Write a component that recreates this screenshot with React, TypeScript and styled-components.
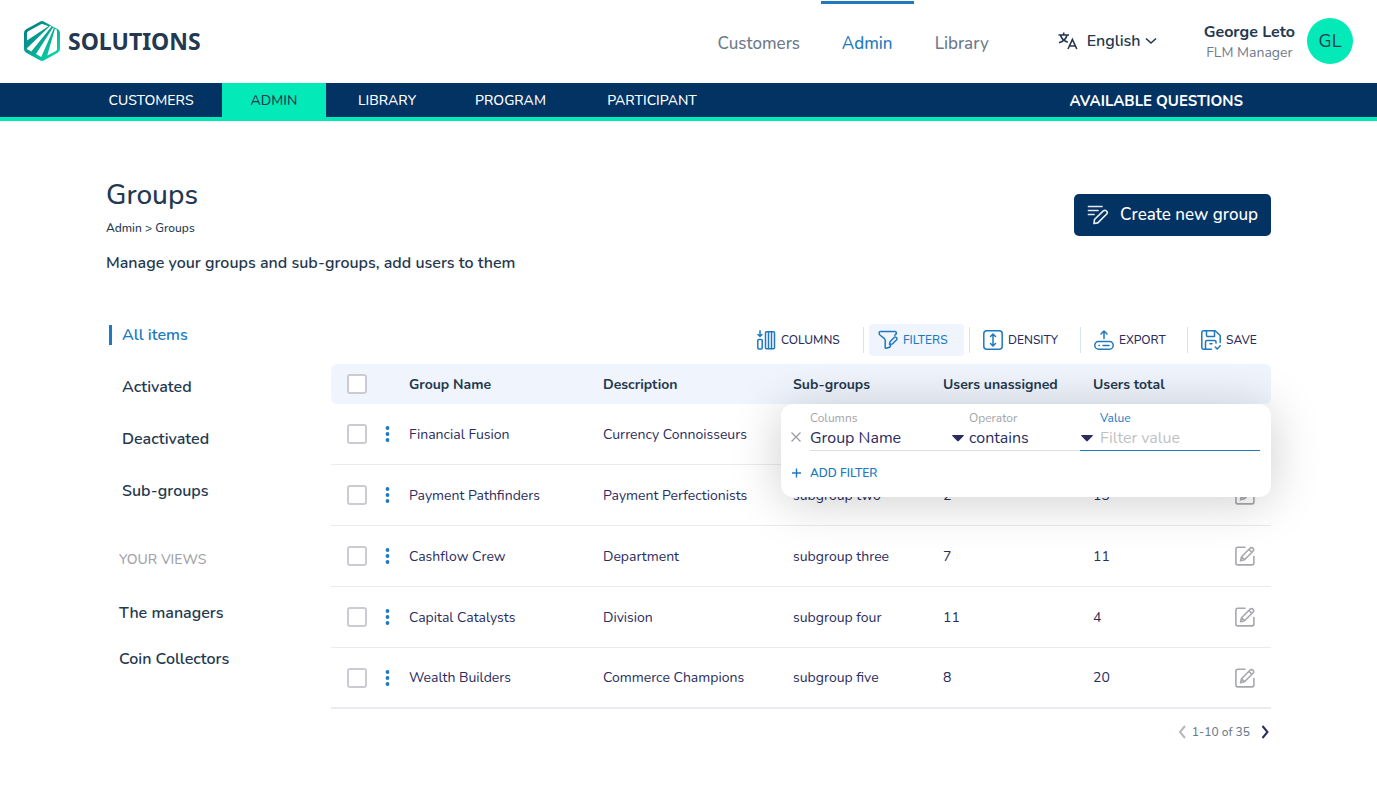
import React from "react";
import styled, { createGlobalStyle } from "styled-components";

const color = {
  ink: "#24384f",
  indigo: "#2a2c5e",
  navy: "#033363",
  mint: "#03e9b8",
  blue: "#2079bf",
  slate: "#6d7a8b",
  gray: "#9fa3a9",
  pale: "#f0f5fd",
  line: "#e9ebee",
};

const GlobalStyle = createGlobalStyle`
  *, *::before, *::after { box-sizing: border-box; }
  body {
    margin: 0;
    background: #fff;
    color: ${color.ink};
    font-family: Nunito, Lato, "Noto Sans", sans-serif;
    font-size: 16px;
    line-height: 20px;
  }
  a { color: inherit; text-decoration: none; }
  button, input, select { font: inherit; color: inherit; }
  button { padding: 0; border: 0; background: none; cursor: pointer; }
  svg { display: block; flex: none; }
`;

/* ---------- Header ---------- */

const Header = styled.header`
  display: flex;
  align-items: center;
  height: 83px;
  padding: 0 24px 2px;
`;

const Brand = styled.a`
  display: flex;
  align-items: center;
  gap: 8px;
  margin-right: auto;
  font-family: "Noto Sans", "Open Sans", sans-serif;
  font-size: 23px;
  font-weight: 700;
  line-height: 40px;
`;

const HeaderNav = styled.nav`
  display: flex;
  align-self: stretch;
  margin-right: 48px;
`;

const HeaderLink = styled.a<{ $width: number; $active?: boolean }>`
  width: ${(p) => p.$width}px;
  padding-top: 30px;
  border-top: 3px solid ${(p) => (p.$active ? color.blue : "transparent")};
  margin-top: 1px;
  color: ${(p) => (p.$active ? color.blue : color.slate)};
  font-size: 17px;
  font-weight: 500;
  text-align: center;
`;

const Language = styled.button`
  display: flex;
  align-items: center;
  width: 98px;
  margin-right: 48px;
  font-weight: 600;
  white-space: nowrap;
`;

const LanguageName = styled.span`
  margin: 0 4px 0 9px;
`;

const Person = styled.div`
  margin-right: 12px;
  padding-top: 3px;
  text-align: center;
  white-space: nowrap;
`;

const PersonName = styled.div`
  font-weight: 700;
`;

const PersonRole = styled.div`
  margin-top: 1px;
  color: ${color.slate};
  font-size: 14px;
`;

const Avatar = styled.div`
  display: flex;
  align-items: center;
  justify-content: center;
  width: 46px;
  height: 46px;
  border-radius: 50%;
  background: ${color.mint};
  font-size: 18px;
`;

/* ---------- Section bar ---------- */

const SectionBar = styled.nav`
  display: flex;
  height: 38px;
  padding: 0 134px 0 80px;
  border-bottom: 4px solid ${color.mint};
  background: ${color.navy};
  color: #fff;
  font-size: 14px;
  line-height: 32px;
`;

const SectionLink = styled.a<{ $width: number; $active?: boolean }>`
  width: ${(p) => p.$width}px;
  padding-top: 2px;
  background: ${(p) => (p.$active ? color.mint : "transparent")};
  color: ${(p) => (p.$active ? color.ink : "#fff")};
  font-weight: 500;
  text-align: center;
`;

const QuestionsLink = styled.a`
  margin-left: auto;
  padding-top: 2px;
  font-size: 15px;
  font-weight: 700;
`;

/* ---------- Page heading ---------- */

const Page = styled.main`
  padding: 54px 106px 32px;
`;

const Heading = styled.div`
  display: flex;
  justify-content: space-between;
  align-items: flex-start;
`;

const Title = styled.h1`
  margin: 0;
  font-size: 28px;
  font-weight: 500;
  line-height: 40px;
`;

const Breadcrumb = styled.nav`
  margin-top: 5px;
  font-size: 12px;
  font-weight: 500;
  line-height: 16px;
`;

const Intro = styled.p`
  margin: 15px 0 0;
  font-weight: 600;
  line-height: 24px;
`;

const CreateButton = styled.button`
  display: flex;
  align-items: center;
  justify-content: space-between;
  width: 197px;
  height: 42px;
  margin-top: 19px;
  padding: 0 13px;
  border-radius: 5px;
  background: ${color.navy};
  color: #fff;
  font-size: 17px;
  font-weight: 500;
  white-space: nowrap;
`;

/* ---------- Sidebar ---------- */

const Columns = styled.div`
  display: flex;
  margin-top: 49px;
`;

const Sidebar = styled.nav`
  flex: none;
  width: 225px;
  padding-top: 1px;
  font-weight: 600;
`;

const LinkList = styled.ul<{ $gap: number }>`
  display: flex;
  flex-direction: column;
  gap: ${(p) => p.$gap}px;
  margin: 0;
  padding: 0;
  list-style: none;
`;

const StatusLink = styled.a<{ $active?: boolean }>`
  display: block;
  margin-left: 3px;
  padding-left: 10px;
  border-left: 3px solid ${(p) => (p.$active ? color.blue : "transparent")};
  color: ${(p) => (p.$active ? color.blue : color.ink)};
`;

const ViewLink = styled.a`
  display: block;
  padding-left: 13px;
`;

const ViewsTitle = styled.h2`
  margin: 49px 0 33px;
  padding-left: 13px;
  color: ${color.gray};
  font-size: 14px;
  font-weight: 500;
  line-height: 20px;
`;

/* ---------- Toolbar ---------- */

const Content = styled.section`
  flex: 1;
  min-width: 0;
`;

const Toolbar = styled.div`
  display: flex;
  align-items: center;
  justify-content: flex-end;
  gap: 5px;
  height: 32px;
  margin-bottom: 8px;
  padding-right: 4px;
`;

const ToolButton = styled.button<{ $width: number; $active?: boolean }>`
  display: flex;
  align-items: center;
  gap: 5px;
  width: ${(p) => p.$width}px;
  height: 32px;
  padding: 0 0 0 ${(p) => (p.$active ? 9 : 8)}px;
  border-radius: 4px;
  background: ${(p) => (p.$active ? color.pale : "transparent")};
  color: ${(p) => (p.$active ? color.blue : color.indigo)};
  font-size: 12px;
  font-weight: 500;
`;

const Separator = styled.span`
  width: 1px;
  height: 26px;
  background: #dde3ea;
`;

/* ---------- Table ---------- */

const TableArea = styled.div`
  position: relative;
`;

const Table = styled.table`
  width: 100%;
  border-collapse: separate;
  border-spacing: 0;
  table-layout: fixed;
  color: ${color.indigo};
  font-size: 14px;
`;

const HeadCell = styled.th`
  height: 40px;
  padding: 0;
  background: ${color.pale};
  color: ${color.ink};
  font-weight: 700;
  text-align: left;
  &:first-child { border-radius: 6px 0 0 6px; padding-left: 16px; }
  &:last-child { border-radius: 0 6px 6px 0; }
`;

const HeadText = styled(HeadCell)`
  padding-top: 1px;
`;

const Cell = styled.td`
  height: 61px;
  padding: 0;
  border-bottom: 1px solid ${color.line};
  &:first-child { padding-left: 16px; }
  tr:last-child > & { border-bottom-width: 2px; }
`;

const TextCell = styled(Cell)`
  padding-top: 1px;
`;

const Checkbox = styled.input`
  display: block;
  appearance: none;
  width: 20px;
  height: 20px;
  margin: 0;
  border: 2px solid #cbccd3;
  border-radius: 3px;
  background: #fff;
`;

const DotsButton = styled.button`
  display: block;
`;

const EditButton = styled.button`
  display: block;
  margin: 0 16px 0 auto;
`;

/* ---------- Filter panel ---------- */

const FilterPanel = styled.form`
  position: absolute;
  top: 40px;
  right: 0;
  width: 490px;
  height: 93px;
  padding: 6px 11px 0 10px;
  border-radius: 12px;
  background: #fff;
  box-shadow: 0 4px 50px rgba(0, 0, 0, 0.2);
`;

const FilterRow = styled.div`
  display: grid;
  grid-template-columns: 19px 159px 111px 1fr;
`;

const RemoveButton = styled.button`
  align-self: end;
  padding-bottom: 8px;
`;

const Field = styled.div<{ $active?: boolean }>`
  display: flex;
  flex-direction: column;
  min-width: 0;
  height: 41px;
  border-bottom: 1px solid ${(p) => (p.$active ? color.blue : "#dcdde0")};
  color: ${color.indigo};
`;

const FieldLabel = styled.label<{ $active?: boolean }>`
  padding-left: ${(p) => (p.$active ? 20 : 0)}px;
  color: ${(p) => (p.$active ? color.blue : color.gray)};
  font-size: 12px;
  line-height: 16px;
`;

const FieldLine = styled.div<{ $inset?: number }>`
  display: flex;
  align-items: center;
  height: 24px;
  padding-right: ${(p) => p.$inset ?? 0}px;
`;

const Select = styled.select`
  flex: 1;
  min-width: 0;
  appearance: none;
  padding: 0;
  border: 0;
  outline: 0;
  background: none;
`;

const ValueInput = styled.input`
  flex: 1;
  min-width: 0;
  margin-left: 6px;
  padding: 0;
  border: 0;
  outline: 0;
  background: none;
  &::placeholder { color: #bfc1c5; opacity: 1; }
`;

const AddFilter = styled.button`
  display: flex;
  align-items: center;
  gap: 8px;
  margin-top: 12px;
  color: ${color.blue};
  font-size: 12px;
  font-weight: 600;
`;

/* ---------- Pagination ---------- */

const Pagination = styled.nav`
  display: flex;
  align-items: center;
  justify-content: flex-end;
  margin-top: 13px;
  padding-right: 1px;
  color: ${color.slate};
  font-size: 12px;
  font-weight: 500;
`;

const PageRange = styled.span`
  margin: 0 11px 0 5px;
`;

/* ---------- Icons ---------- */

const LogoMark = () => (
  <svg width="36" height="40" viewBox="0 0 36 40" aria-hidden="true">
    <defs>
      <linearGradient id="mark" x1="0" y1="0" x2="1" y2="1">
        <stop offset="0.1" stopColor="#057e83" />
        <stop offset="0.5" stopColor="#08a893" />
        <stop offset="0.9" stopColor="#08dba8" />
      </linearGradient>
    </defs>
    <path
      fill="url(#mark)"
      d="M15.8.7Q18-.6 20.200.7L33.800 8.200Q36 9.500 36 12V28Q36 30.500 33.800 31.800L20.200 39.300Q18 40.600 15.800 39.300L2.200 31.800Q0 30.500 0 28V12Q0 9.500 2.200 8.200Z"
    />
    <g fill="#fff">
      <path d="M3 12.300Q3 11 4.200 10.300L17 3.300Q18 2.800 19.200 3.300L24.400 5.300L3 19.600Z" />
      <path d="M26.200 4.800L27.600 5.600L7.300 30.600L3.600 28.600Q3 28.200 3 27.200Z" />
      <path d="M29 6.500L29.900 7L17.300 35.900L12 33Z" />
      <path d="M31 7.500L32.200 8.300Q33 9 33 10.300V28Q33 29.300 31.900 29.900L23.300 34.600Z" />
    </g>
  </svg>
);

const TranslateIcon = () => (
  <svg width="20" height="20" viewBox="0 0 20 20" fill="none" stroke={color.ink} strokeWidth="1.6" aria-hidden="true">
    <path d="M.5 4H11M5.700 1.500V4M2.500 4C3.200 7 6 10 9.800 11.200M9 4C8.300 7.400 5 10.600 1 11.800" />
    <path d="M10 18L14.400 8.500L18.800 18M11.500 15H17.300" />
  </svg>
);

const Chevron = ({ dir, tone = color.ink }: { dir: "down" | "left" | "right"; tone?: string }) => {
  const down = dir === "down";
  const d = down ? "M1 1.500L6 6L11 1.500" : dir === "left" ? "M7 1L2 7L7 13" : "M1.500 1L6.500 7L1.500 13";
  return (
    <svg
      width={down ? 12 : 9}
      height={down ? 8 : 14}
      viewBox={down ? "0 0 12 8" : "0 0 9 14"}
      fill="none"
      stroke={tone}
      strokeWidth={down ? 1.6 : 2}
      aria-hidden="true"
    >
      <path d={d} />
    </svg>
  );
};

const ComposeIcon = () => (
  <svg width="22" height="20" viewBox="0 0 22 20" fill="none" stroke="#e4ebf2" strokeWidth="1.700" strokeLinecap="round" strokeLinejoin="round" aria-hidden="true">
    <path d="M1.500 1.500H15M1.500 5.500H11M1.500 9.500H7" />
    <path d="M7 18.500L7.500 14.500L16.300 5.900Q18 4.600 19.500 6T19.700 9L10.800 17.800Z" />
  </svg>
);

const toolSvg = {
  width: 20,
  height: 20,
  viewBox: "0 0 20 20",
  fill: "none",
  stroke: color.blue,
  strokeWidth: 1.5,
  strokeLinecap: "round" as const,
  strokeLinejoin: "round" as const,
  "aria-hidden": true,
};

const ColumnsIcon = () => (
  <svg {...toolSvg}>
    <path d="M4 .8V6M2 4.500L4 6.500L6 4.500" />
    <rect x="1.800" y="9.500" width="4.400" height="9.500" rx="1" />
    <rect x="9.500" y="1.800" width="9" height="17" rx="1" />
    <path d="M12.500 2V18.500M15.500 2V18.500" />
  </svg>
);

const FilterIcon = () => (
  <svg {...toolSvg}>
    <path d="M18.300 3.800V2.800Q18.300 1.500 17 1.500H2.500Q1.200 1.500 1.200 2.800V3.600Q1.200 4.400 1.900 5L6.500 8.700Q7.200 9.300 7.200 10.200V17.500Q7.200 18.600 8.200 18.300L11.400 17.300" />
    <path d="M11.500 14.200L12 11.800L16.200 7.400Q17.200 6.600 18.300 7.500T18.600 9.800L14.300 14L11.500 14.200Z" />
    <path d="M18.300 3.800L16.800 5.200M12.400 14.200V16.500L11.400 17.300" />
  </svg>
);

const DensityIcon = () => (
  <svg {...toolSvg}>
    <rect x=".8" y=".8" width="18.400" height="18.400" rx="3" />
    <path d="M10 4.500V15.500M7.500 6.500L10 4L12.500 6.500M7.500 13.500L10 16L12.500 13.500" />
  </svg>
);

const ExportIcon = () => (
  <svg {...toolSvg}>
    <rect x=".8" y="11.500" width="18.400" height="7.700" rx="3.800" />
    <path d="M10 8.500V1.500M7 4L10 1L13 4M5 15.400H5.400M9 15.400H15" />
  </svg>
);

const SaveIcon = () => (
  <svg {...toolSvg}>
    <path d="M10.500 19.200H2.800Q.8 19.200.8 17.200V2.800Q.8.8 2.800.8H14.200L19.200 5.500V12.500" />
    <path d="M5.500 1V5.500Q5.500 6.500 6.500 6.500H13.500V1M4.500 19V12Q4.500 10.500 6 10.500H13.500Q15 10.500 15 12V13M9 13.800H11M14.300 17L16.200 19L19.300 15.800" />
  </svg>
);

const DotsIcon = () => (
  <svg width="5" height="18" viewBox="0 0 5 18" fill={color.blue} aria-hidden="true">
    <circle cx="2.500" cy="3" r="1.900" />
    <circle cx="2.500" cy="9" r="1.900" />
    <circle cx="2.500" cy="15" r="1.900" />
  </svg>
);

const EditIcon = () => (
  <svg width="20" height="20" viewBox="0 0 20 20" fill="none" stroke="#a6a8ad" strokeWidth="1.600" strokeLinecap="round" strokeLinejoin="round" aria-hidden="true">
    <path d="M10 1.300H2.800Q.9 1.300.9 3.200V17Q.9 18.900 2.800 18.900H17Q18.900 18.900 18.900 17V10.500" />
    <path d="M5.500 14.700L6.500 10.800L15 2.200Q16.400.9 18 2.200Q19.400 3.800 18 5.300L9.500 13.700ZM14 3.500L16.800 6.300M6.700 10.900L9.300 13.500" />
  </svg>
);

const CaretIcon = () => (
  <svg width="14" height="8" viewBox="0 0 14 8" fill={color.indigo} aria-hidden="true">
    <path d="M1.700 1H12.300Q13.400 1 12.600 1.900L8 6.700Q7 7.700 6 6.700L1.400 1.900Q.6 1 1.700 1Z" />
  </svg>
);

const CloseIcon = () => (
  <svg width="10" height="12" viewBox="0 0 10 12" stroke="#979aa0" strokeWidth="1.200" aria-hidden="true">
    <path d="M.5 1.500L9.500 10.500M9.500 1.500L.5 10.500" />
  </svg>
);

const PlusIcon = () => (
  <svg width="11" height="10" viewBox="0 0 11 10" stroke={color.blue} strokeWidth="1.400" aria-hidden="true">
    <path d="M1 5H10M5.500 .5V9.500" />
  </svg>
);

/* ---------- Data ---------- */

const sections = [
  { label: "CUSTOMERS", width: 142 },
  { label: "ADMIN", width: 104, active: true },
  { label: "LIBRARY", width: 122 },
  { label: "PROGRAM", width: 125 },
  { label: "PARTICIPANT", width: 158 },
];

const tools = [
  { label: "COLUMNS", width: 110, Icon: ColumnsIcon },
  { label: "FILTERS", width: 95, Icon: FilterIcon, active: true },
  { label: "DENSITY", width: 100, Icon: DensityIcon },
  { label: "EXPORT", width: 96, Icon: ExportIcon },
  { label: "SAVE", width: 74, Icon: SaveIcon },
];

const groups = [
  { name: "Financial Fusion", description: "Currency Connoisseurs", sub: "subgroup one", unassigned: 5, total: 12 },
  { name: "Payment Pathfinders", description: "Payment Perfectionists", sub: "subgroup two", unassigned: 2, total: 13 },
  { name: "Cashflow Crew", description: "Department", sub: "subgroup three", unassigned: 7, total: 11 },
  { name: "Capital Catalysts", description: "Division", sub: "subgroup four", unassigned: 11, total: 4 },
  { name: "Wealth Builders", description: "Commerce Champions", sub: "subgroup five", unassigned: 8, total: 20 },
];

const columnWidths = [54, 24, 194, 190, 150, 150, 100];

export default function App() {
  return (
    <>
      <GlobalStyle />
      <Header>
        <Brand href="#home">
          <LogoMark />
          SOLUTIONS
        </Brand>
        <HeaderNav aria-label="Main">
          <HeaderLink href="#customers" $width={124}>Customers</HeaderLink>
          <HeaderLink href="#admin" $width={93} $active>Admin</HeaderLink>
          <HeaderLink href="#library" $width={96}>Library</HeaderLink>
        </HeaderNav>
        <Language type="button">
          <TranslateIcon />
          <LanguageName>English</LanguageName>
          <Chevron dir="down" />
        </Language>
        <Person>
          <PersonName>George Leto</PersonName>
          <PersonRole>FLM Manager</PersonRole>
        </Person>
        <Avatar>GL</Avatar>
      </Header>

      <SectionBar aria-label="Sections">
        {sections.map((s) => (
          <SectionLink key={s.label} href={`#${s.label.toLowerCase()}`} $width={s.width} $active={s.active}>
            {s.label}
          </SectionLink>
        ))}
        <QuestionsLink href="#questions">AVAILABLE QUESTIONS</QuestionsLink>
      </SectionBar>

      <Page>
        <Heading>
          <div>
            <Title>Groups</Title>
            <Breadcrumb aria-label="Breadcrumb">
              <a href="#admin">Admin</a> &gt; <a href="#groups">Groups</a>
            </Breadcrumb>
            <Intro>Manage your groups and sub-groups, add users to them</Intro>
          </div>
          <CreateButton type="button">
            <ComposeIcon />
            Create new group
          </CreateButton>
        </Heading>

        <Columns>
          <Sidebar aria-label="Views">
            <LinkList $gap={32}>
              <li><StatusLink href="#all" $active>All items</StatusLink></li>
              <li><StatusLink href="#activated">Activated</StatusLink></li>
              <li><StatusLink href="#deactivated">Deactivated</StatusLink></li>
              <li><StatusLink href="#sub-groups">Sub-groups</StatusLink></li>
            </LinkList>
            <ViewsTitle>YOUR VIEWS</ViewsTitle>
            <LinkList $gap={26}>
              <li><ViewLink href="#managers">The managers</ViewLink></li>
              <li><ViewLink href="#collectors">Coin Collectors</ViewLink></li>
            </LinkList>
          </Sidebar>

          <Content>
            <Toolbar>
              {tools.map(({ label, width, Icon, active }, i) => (
                <React.Fragment key={label}>
                  {i > 0 && <Separator />}
                  <ToolButton type="button" $width={width} $active={active}>
                    <Icon />
                    {label}
                  </ToolButton>
                </React.Fragment>
              ))}
            </Toolbar>

            <TableArea>
              <Table>
                <colgroup>
                  {columnWidths.map((w, i) => <col key={i} width={w} />)}
                  <col />
                </colgroup>
                <thead>
                  <tr>
                    <HeadCell><Checkbox type="checkbox" aria-label="Select all groups" /></HeadCell>
                    <HeadCell />
                    <HeadText>Group Name</HeadText>
                    <HeadText>Description</HeadText>
                    <HeadText>Sub-groups</HeadText>
                    <HeadText>Users unassigned</HeadText>
                    <HeadText>Users total</HeadText>
                    <HeadCell />
                  </tr>
                </thead>
                <tbody>
                  {groups.map((g) => (
                    <tr key={g.name}>
                      <Cell><Checkbox type="checkbox" aria-label={`Select ${g.name}`} /></Cell>
                      <Cell><DotsButton type="button" aria-label={`Actions for ${g.name}`}><DotsIcon /></DotsButton></Cell>
                      <TextCell>{g.name}</TextCell>
                      <TextCell>{g.description}</TextCell>
                      <TextCell>{g.sub}</TextCell>
                      <TextCell>{g.unassigned}</TextCell>
                      <TextCell>{g.total}</TextCell>
                      <Cell><EditButton type="button" aria-label={`Edit ${g.name}`}><EditIcon /></EditButton></Cell>
                    </tr>
                  ))}
                </tbody>
              </Table>

              <FilterPanel>
                <FilterRow>
                  <RemoveButton type="button" aria-label="Remove filter"><CloseIcon /></RemoveButton>
                  <Field>
                    <FieldLabel htmlFor="filter-column">Columns</FieldLabel>
                    <FieldLine $inset={4}>
                      <Select id="filter-column"><option>Group Name</option><option>Description</option></Select>
                      <CaretIcon />
                    </FieldLine>
                  </Field>
                  <Field>
                    <FieldLabel htmlFor="filter-operator">Operator</FieldLabel>
                    <FieldLine>
                      <Select id="filter-operator"><option>contains</option><option>equals</option></Select>
                    </FieldLine>
                  </Field>
                  <Field $active>
                    <FieldLabel htmlFor="filter-value" $active>Value</FieldLabel>
                    <FieldLine>
                      <CaretIcon />
                      <ValueInput id="filter-value" type="text" placeholder="Filter value" />
                    </FieldLine>
                  </Field>
                </FilterRow>
                <AddFilter type="button"><PlusIcon />ADD FILTER</AddFilter>
              </FilterPanel>
            </TableArea>

            <Pagination aria-label="Pagination">
              <button type="button" aria-label="Previous page"><Chevron dir="left" tone="#b4b8bf" /></button>
              <PageRange>1-10 of 35</PageRange>
              <button type="button" aria-label="Next page"><Chevron dir="right" tone={color.indigo} /></button>
            </Pagination>
          </Content>
        </Columns>
      </Page>
    </>
  );
}
